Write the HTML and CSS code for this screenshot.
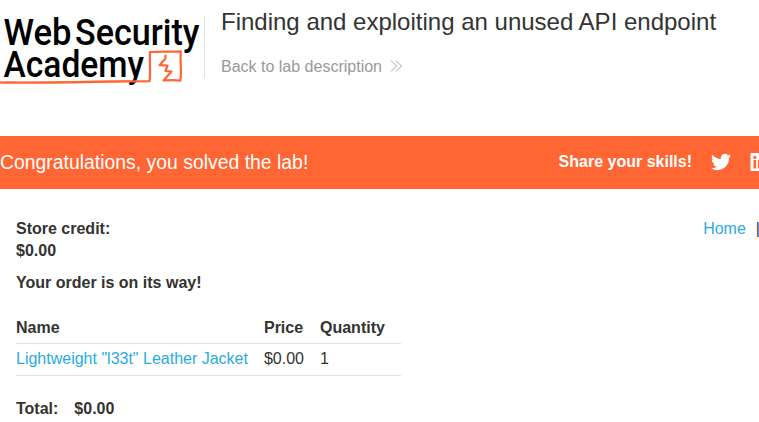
FILE: index.html
```html
<!DOCTYPE html>
<html lang="en">
<head>
<meta charset="utf-8">
<title>Finding and exploiting an unused API endpoint</title>
<link rel="stylesheet" href="styles.css">
</head>
<body>
<header class="lab-header">
  <svg class="logo" width="204" height="90" viewBox="0 0 204 90" role="img" aria-label="Web Security Academy">
    <g class="wordmark">
      <text x="3.5" y="44.5" textLength="68" lengthAdjust="spacingAndGlyphs">Web</text>
      <text x="75" y="44.5" textLength="124.500" lengthAdjust="spacingAndGlyphs">Security</text>
      <text x="3.500" y="77" textLength="140.500" lengthAdjust="spacingAndGlyphs">Academy</text>
    </g>
    <g class="sketch">
      <path d="M0 82.300 C35 83.800 85 81.700 149.500 81.200 M149.500 81.800 C151 72 149.200 61 150 52 C160 51.600 171 51.800 180.800 51.400 C179.800 61 182 71 180.300 80.600 C174 79.500 169 80 163.500 80.500 L171.500 71.500 L165.500 71 L167.500 65.500 L159.500 65.200 L165.300 58.800 L165.500 55"/>
      <path class="thin" d="M6 81.800 C45 82.600 90 80.600 130 80.800"/>
    </g>
  </svg>
  <div class="title-container">
    <h1>Finding and exploiting an unused API endpoint</h1>
    <a class="back" href="#">Back to lab description
      <svg width="13" height="12" viewBox="0 0 13 12"><path d="M1 .5 6.500 6 1 11.500M6 .5 11.500 6 6 11.500"/></svg>
    </a>
  </div>
</header>
<section class="banner">
  <h2>Congratulations, you solved the lab!</h2>
  <div class="share">
    <span>Share your skills!</span>
    <svg width="20" height="20" viewBox="0 0 24 24"><path d="M24 4.600a10 10 0 0 1-2.800.8 5 5 0 0 0 2.200-2.700 10 10 0 0 1-3.100 1.200 4.900 4.900 0 0 0-8.400 4.500A14 14 0 0 1 1.700 3.200a4.900 4.900 0 0 0 1.500 6.500A5 5 0 0 1 1 9.100a4.900 4.900 0 0 0 3.900 4.900 5 5 0 0 1-2.200.1 4.900 4.900 0 0 0 4.600 3.400A9.900 9.900 0 0 1 0 19.500a14 14 0 0 0 21.500-12.400A10 10 0 0 0 24 4.600z"/></svg>
    <svg class="linkedin" width="20" height="20" viewBox="0 0 20 20"><path fill-rule="evenodd" d="M1.500 1h17a1 1 0 0 1 1 1v16a1 1 0 0 1-1 1h-17a1 1 0 0 1-1-1V2a1 1 0 0 1 1-1zM3.500 8v8.500h2.700V8zM4.850 3.800a1.600 1.600 0 1 0 0 3.200 1.600 1.600 0 0 0 0-3.200zM8 8v8.500h2.700v-4.300c0-2.700 3.200-2.700 3.200 0v4.300h2.700v-5.100c0-4-4.300-4.400-5.900-2V8z"/></svg>
  </div>
</section>
<main class="page">
  <div class="top">
    <div class="credit"><strong>Store credit:</strong><strong>$0.00</strong></div>
    <nav><a href="#">Home</a><span>|</span></nav>
  </div>
  <h4>Your order is on its way!</h4>
  <table class="items">
    <thead><tr><th>Name</th><th>Price</th><th>Quantity</th></tr></thead>
    <tbody><tr><td><a href="#">Lightweight "l33t" Leather Jacket</a></td><td>$0.00</td><td>1</td></tr></tbody>
  </table>
  <div class="total"><span>Total:</span><span>$0.00</span></div>
</main>
</body>
</html>
```
FILE: styles.css
```css
* { box-sizing: border-box; }
body {
  margin: 0;
  height: 422px;
  overflow: hidden;
  background: #fff;
  color: #333332;
  font: 16px/22px "Liberation Sans", Arial, sans-serif;
}
h1, h2, h4 { margin: 0; font-weight: 400; }
a { color: #29abe2; text-decoration: none; }
.lab-header { display: flex; height: 136px; }
.logo { flex: none; }
.wordmark { font: 500 37.5px Roboto, sans-serif; fill: #000; }
.sketch { fill: none; stroke: #ff6633; stroke-width: 2.2; stroke-linejoin: round; }
.sketch .thin { stroke-width: 0.8; }
.title-container {
  height: 62px;
  margin-top: 16px;
  padding-left: 16px;
  border-left: 1px solid #e0e0e0;
}
h1 { margin-top: -8px; font-size: 24px; line-height: 28px; white-space: nowrap; }
.back { display: flex; align-items: center; gap: 8px; margin-top: 20px; color: #999; }
.back svg { margin-top: -2px; fill: none; stroke: #999; stroke-width: 0.9; }
.banner {
  display: flex;
  align-items: center;
  justify-content: space-between;
  height: 53px;
  padding-bottom: 2px;
  background: #ff6633;
  color: #fff;
}
.banner h2 { font-size: 19.4px; white-space: nowrap; }
.share { display: flex; align-items: center; flex: none; font-weight: 700; margin-right: -11px; }
.share svg { margin-left: 19px; fill: #fff; }
.page { padding: 29px 0 0 16px; }
.top { display: flex; justify-content: space-between; }
.credit { display: flex; flex-direction: column; }
nav { display: flex; gap: 10px; margin-right: -1px; }
h4 { margin-top: 10px; font-weight: 700; }
.items { margin-top: 18px; border-collapse: collapse; }
.items th, .items td { padding: 4px 16px 5px 0; border-bottom: 1px solid #e0e0e0; text-align: left; }
.items th { padding-top: 5px; padding-bottom: 4px; }
.total { display: flex; gap: 16px; margin-top: 22px; font-weight: 700; }
```
